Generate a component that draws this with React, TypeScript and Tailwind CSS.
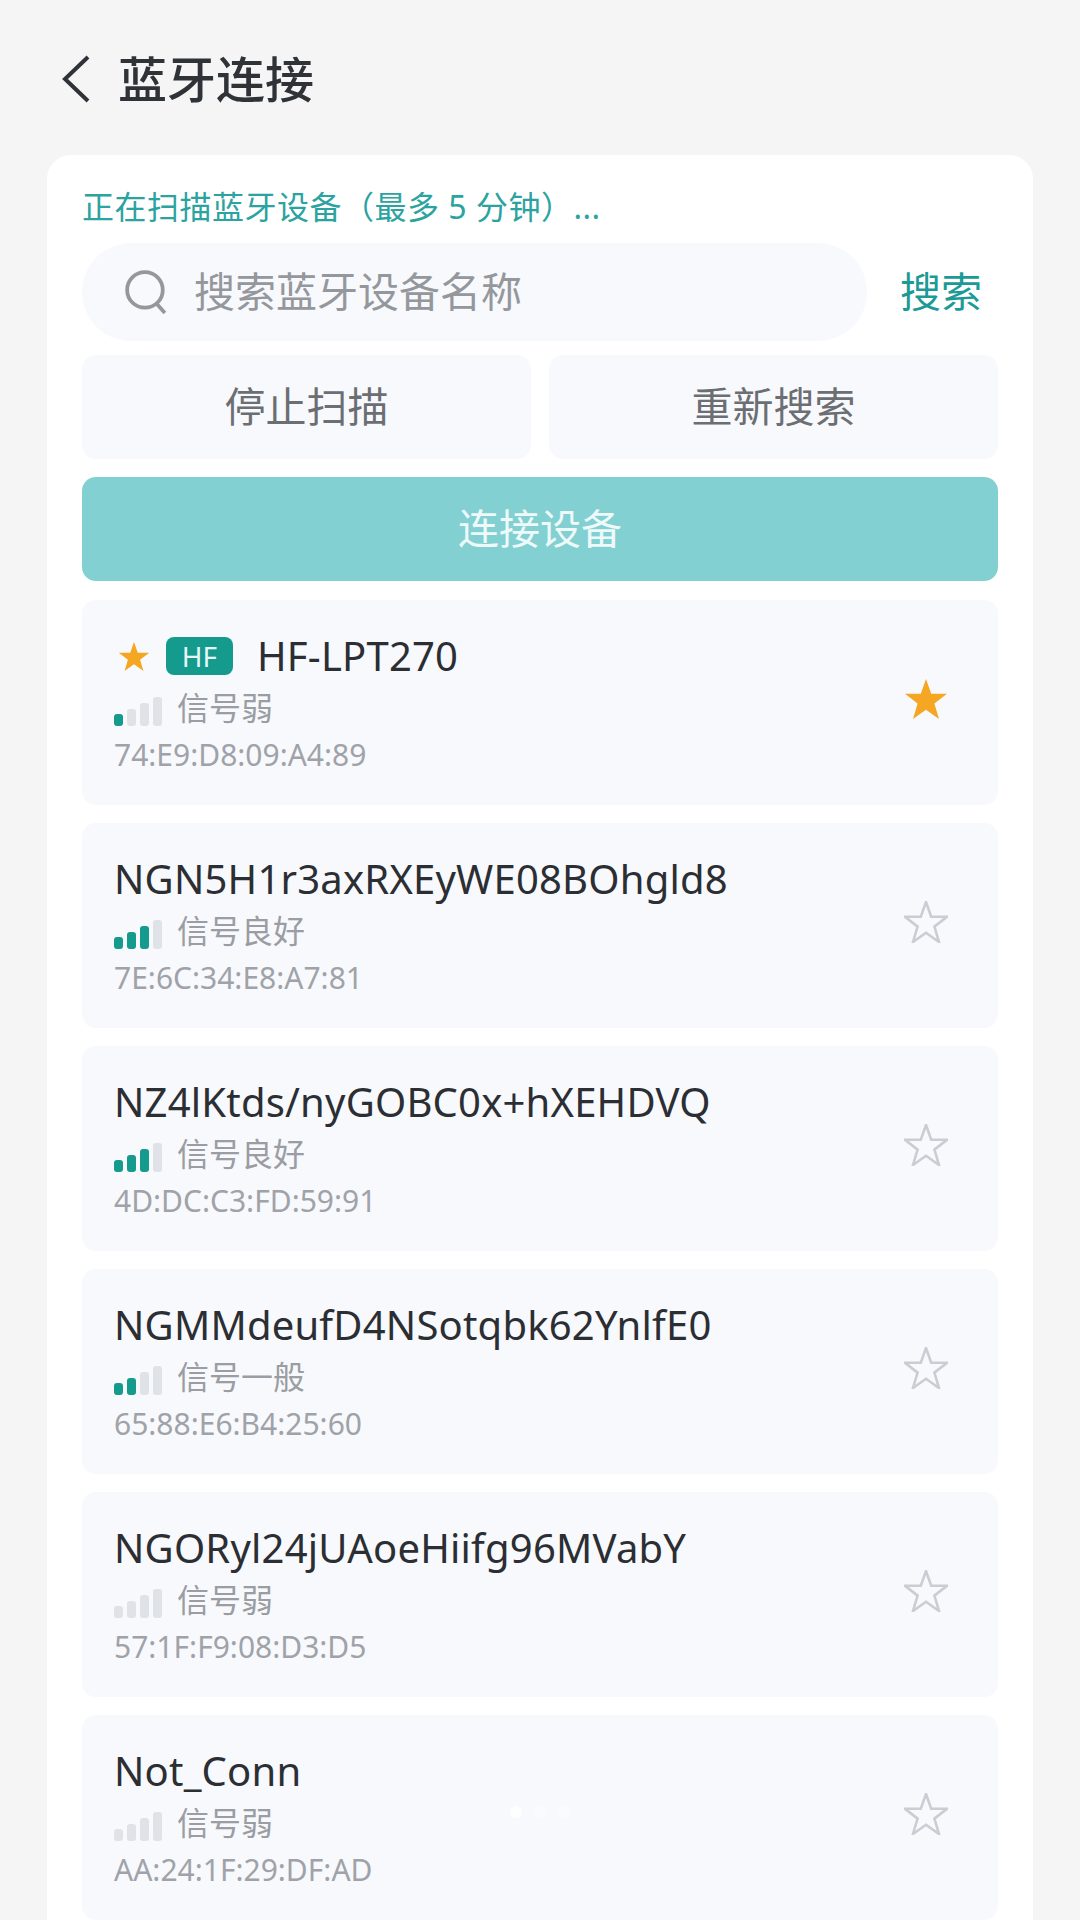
const devices = [
  { name: "HF-LPT270", label: "信号弱", level: 1, mac: "74:E9:D8:09:A4:89", starred: true },
  { name: "NGN5H1r3axRXEyWE08BOhgld8", label: "信号良好", level: 3, mac: "7E:6C:34:E8:A7:81", starred: false },
  { name: "NZ4lKtds/nyGOBC0x+hXEHDVQ", label: "信号良好", level: 3, mac: "4D:DC:C3:FD:59:91", starred: false },
  { name: "NGMMdeufD4NSotqbk62YnlfE0", label: "信号一般", level: 2, mac: "65:88:E6:B4:25:60", starred: false },
  { name: "NGORyl24jUAoeHiifg96MVabY", label: "信号弱", level: 0, mac: "57:1F:F9:08:D3:D5", starred: false },
  { name: "Not_Conn", label: "信号弱", level: 0, mac: "AA:24:1F:29:DF:AD", starred: false },
]

const STAR_POINTS = "22,1 27.2,15.8 43,15.8 30.4,25.6 35,41 22,31.8 9,41 13.6,25.6 1,15.8 16.8,15.8"

function Star({ filled, className }: { filled: boolean; className: string }) {
  return (
    <svg viewBox="0 0 44 42" className={className}>
      <polygon
        points={STAR_POINTS}
        fill={filled ? "#f5a623" : "none"}
        stroke={filled ? "none" : "#c9cdd4"}
        strokeWidth="2.6"
        strokeLinejoin="miter"
      />
    </svg>
  )
}

function SignalBars({ level }: { level: number }) {
  const heights = ["h-[12px]", "h-[17px]", "h-[23px]", "h-[29px]"]
  return (
    <div className="flex items-end gap-[4px]">
      {heights.map((height, i) => (
        <div key={i} className={`w-[9px] rounded-[3px] ${height} ${i < level ? "bg-[#159a8e]" : "bg-[#dfe2e6]"}`} />
      ))}
    </div>
  )
}

function DeviceRow({ device }: { device: (typeof devices)[number] }) {
  return (
    <div className="flex h-[205px] items-center justify-between rounded-[14px] bg-[#f8f9fc] pl-[32px] pr-[50px]">
      <div className="flex flex-col">
        <div className="flex h-[52px] items-center">
          {device.starred && (
            <>
              <Star filled className="mr-[16px] ml-[4px] h-[31px] w-[32px]" />
              <span className="mr-[24px] flex h-[38px] w-[67px] items-center justify-center rounded-[8px] bg-[#159a8e] text-[28px] text-[#e6f7f5]">
                HF
              </span>
            </>
          )}
          <span className="text-[40px] leading-[52px] tracking-[0.2px] text-[#2b2e33]">{device.name}</span>
        </div>
        <div className="mt-[4px] flex h-[44px] items-center gap-[15px]">
          <div className="mt-[6px]">
            <SignalBars level={device.level} />
          </div>
          <span className="text-[32px] leading-[44px] text-[#9a9da3]">{device.label}</span>
        </div>
        <span className="mt-[5px] text-[30px] leading-[40px] text-[#9fa3a9]">{device.mac}</span>
      </div>
      <Star filled={device.starred} className="mb-[8px] h-[42px] w-[44px]" />
    </div>
  )
}

export default function App() {
  return (
    <div className="relative h-[1920px] w-[1080px] overflow-hidden bg-[#f5f5f5] font-['Noto_Sans','Noto_Sans_CJK_SC',sans-serif]">
      <div className="flex h-[155px] items-center pl-[60px]">
        <svg viewBox="0 0 32 48" className="mt-[3px] h-[48px] w-[32px]" fill="none" stroke="#2f3237" strokeWidth="4">
          <path d="M28 2 L5 24 L28 46" />
        </svg>
        <h1 className="ml-[26px] mt-[4px] text-[49px] font-medium leading-none text-[#2f3237]">蓝牙连接</h1>
      </div>

      <div className="mx-[47px] rounded-t-[24px] bg-white px-[35px] pt-[32px]">
        <p className="text-[32px] leading-[40px] tracking-[0.5px] text-[#2ba3a0]">正在扫描蓝牙设备（最多 5 分钟）...</p>

        <div className="mt-[16px] flex h-[98px] items-center">
          <div className="flex h-full w-[785px] items-center rounded-full bg-[#f8f9fc] pl-[42px]">
            <svg viewBox="0 0 42 42" className="h-[44px] w-[44px]" fill="none" stroke="#94979c" strokeWidth="3.6">
              <circle cx="20" cy="19" r="17" />
              <path d="M31 32 L39 41" />
            </svg>
            <span className="ml-[26px] text-[41px] text-[#94979c]">搜索蓝牙设备名称</span>
          </div>
          <span className="ml-[33px] text-[41px] text-[#1c9a96]">搜索</span>
        </div>

        <div className="mt-[14px] grid grid-cols-2 gap-[18px]">
          <button className="h-[104px] rounded-[14px] bg-[#f8f9fc] text-[41px] text-[#6b6e73]">停止扫描</button>
          <button className="h-[104px] rounded-[14px] bg-[#f8f9fc] text-[41px] text-[#6b6e73]">重新搜索</button>
        </div>

        <button className="mt-[18px] h-[104px] w-full rounded-[14px] bg-[#82d0d2] text-[41px] text-[#eef9f9]">连接设备</button>

        <div className="mt-[19px] flex flex-col gap-[18px]">
          {devices.map((device) => (
            <DeviceRow key={device.mac} device={device} />
          ))}
        </div>
      </div>

      <div className="absolute left-[510px] top-[1806px] flex gap-[12px]">
        <div className="h-[12px] w-[12px] rounded-full bg-white/80" />
        <div className="h-[12px] w-[12px] rounded-full bg-white/40" />
        <div className="h-[12px] w-[12px] rounded-full bg-white/30" />
      </div>
    </div>
  )
}
